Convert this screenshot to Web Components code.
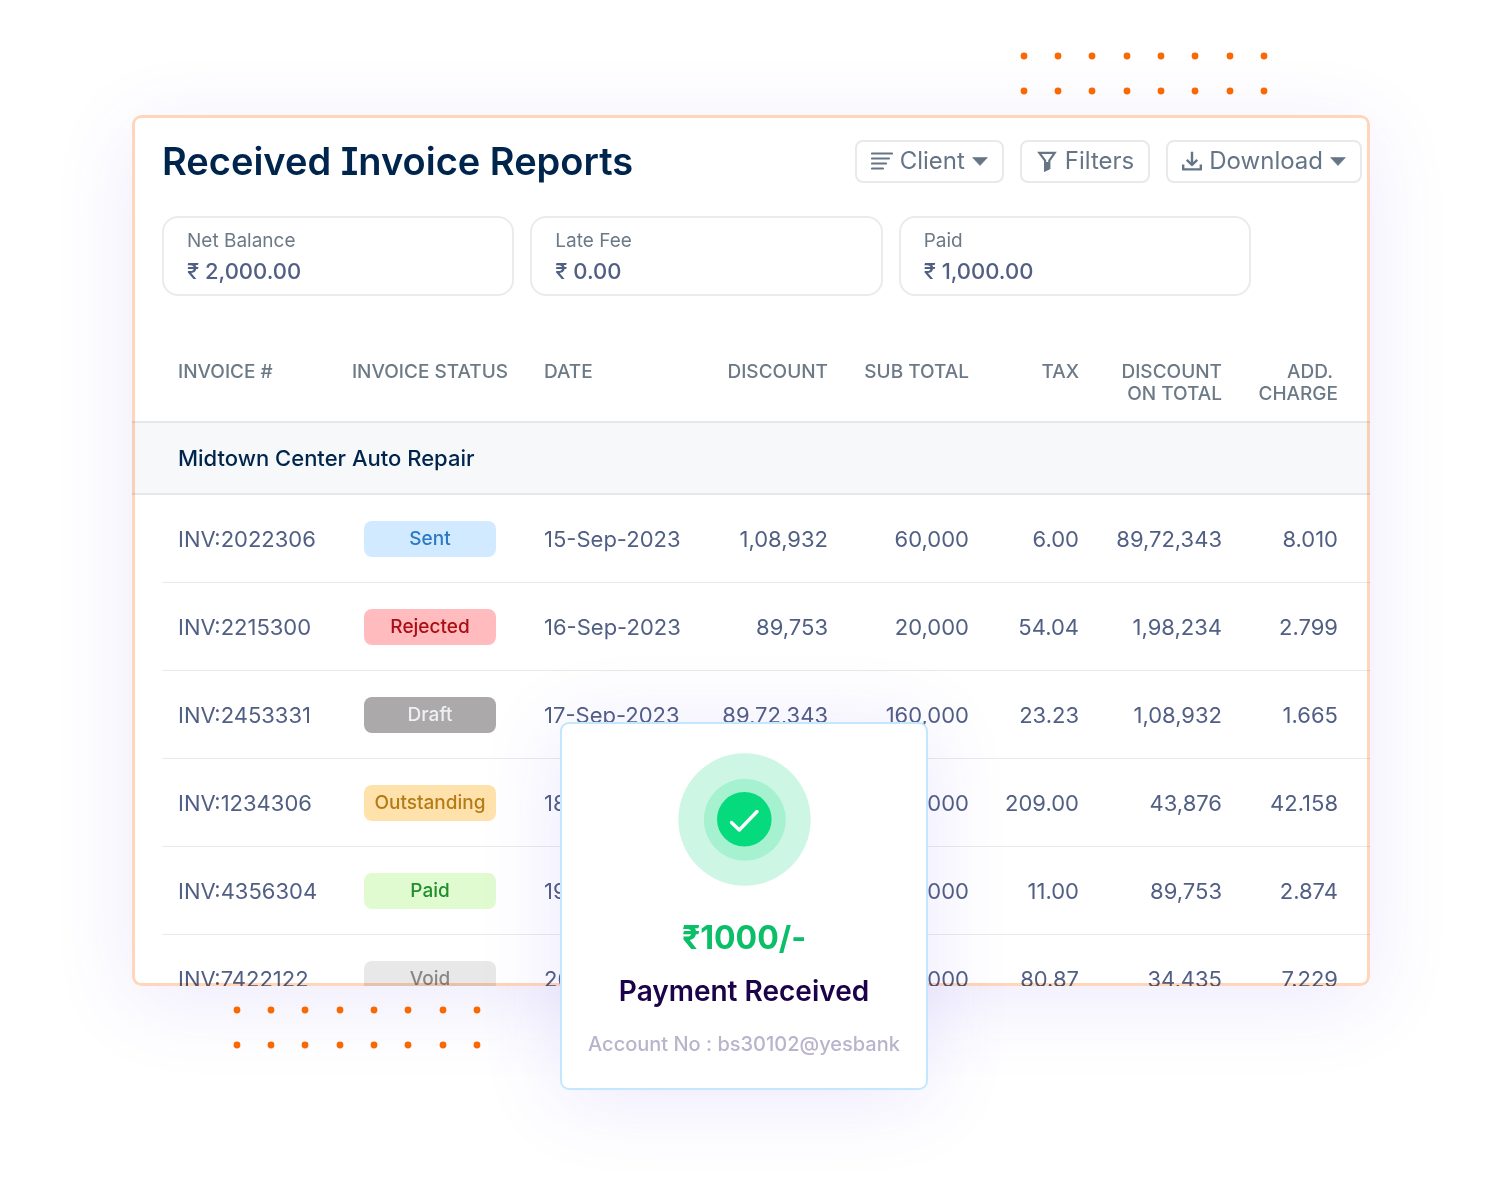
<!DOCTYPE html>
<html lang="en">
<head>
<meta charset="utf-8">
<title>Received Invoice Reports</title>
<style>
  body { margin: 0; background: #fff; font-family: Inter, "Liberation Sans", sans-serif; }
</style>
</head>
<body>
<invoice-showcase>
  <dot-grid slot="above"></dot-grid>
  <report-card heading="Received Invoice Reports">
    <tool-button slot="tools" icon="lines" menu>Client</tool-button>
    <tool-button slot="tools" icon="funnel">Filters</tool-button>
    <tool-button slot="tools" icon="download" menu>Download</tool-button>
    <stat-card slot="stats" label="Net Balance">₹ 2,000.00</stat-card>
    <stat-card slot="stats" label="Late Fee">₹ 0.00</stat-card>
    <stat-card slot="stats" label="Paid">₹ 1,000.00</stat-card>
    <invoice-table></invoice-table>
  </report-card>
  <dot-grid slot="below"></dot-grid>
  <payment-toast slot="toast" amount="₹1000/-" account="Account No : bs30102@yesbank">Payment Received</payment-toast>
</invoice-showcase>

<script>
const define = (name, render) => customElements.define(name, class extends HTMLElement {
  constructor() {
    super();
    this.attachShadow({ mode: 'open' });
  }
  connectedCallback() {
    this.shadowRoot.innerHTML = render(this);
  }
});

define('invoice-showcase', () => `
  <style>
    :host { display: block; position: relative; padding: 0 116px 150px 132px; }
    .above { display: flex; justify-content: flex-end; padding: 52px 102px 20px 0; }
    .below { display: flex; padding: 20px 0 0 101px; }
    .toast { position: absolute; top: 722px; left: 50%; margin-left: -183px; }
  </style>
  <div class="above"><slot name="above"></slot></div>
  <slot></slot>
  <div class="below"><slot name="below"></slot></div>
  <div class="toast"><slot name="toast"></slot></div>
`);

define('dot-grid', () => {
  const xs = [4, 38, 72, 107, 141, 175, 210, 244];
  const dots = [4, 39].map(y => xs.map(x => `<circle cx="${x}" cy="${y}" r="3.4"/>`).join('')).join('');
  return `
    <style>
      :host { display: block; position: relative; z-index: 1; }
      svg { display: block; fill: #f86803; }
    </style>
    <svg width="248" height="43" viewBox="0 0 248 43" aria-hidden="true">${dots}</svg>
  `;
});

define('report-card', host => `
  <style>
    :host {
      display: block; position: relative; overflow: hidden;
      background: #fff; border-radius: 9px;
      box-shadow: 0 16px 84px rgba(90, 60, 230, .11);
    }
    :host::after {
      content: ""; position: absolute; inset: 0; pointer-events: none;
      border: 3px solid #ffd6b9; border-radius: 9px; mix-blend-mode: multiply;
    }
    header { display: flex; align-items: center; justify-content: space-between; padding: 24px 8px 0 30px; }
    h1 {
      margin: 0; font-size: 38px; line-height: 44px; font-weight: 600; color: #00254d;
      font-feature-settings: "cv08";
    }
    .tools { display: flex; gap: 16px; }
    .stats { display: grid; grid-template-columns: repeat(3, 1fr); gap: 16px; margin: 33px 119px 0 30px; }
  </style>
  <header>
    <h1>${host.getAttribute('heading')}</h1>
    <div class="tools"><slot name="tools"></slot></div>
  </header>
  <div class="stats"><slot name="stats"></slot></div>
  <slot></slot>
`);

const icons = {
  lines: `<svg width="22" height="18" viewBox="0 0 22 18"><path d="M1 1.5H21M1 6.5H18M1 11.5H15M1 16.5H12" stroke="currentColor" stroke-width="2.2" stroke-linecap="round"/></svg>`,
  funnel: `<svg width="22" height="21" viewBox="-1.5 0 22 21"><path d="M1.8 1.8H17.2L11.8 9.6V17.4L7.6 19.4V9.6Z" fill="none" stroke="currentColor" stroke-width="2.2"/><path d="M7.6 11H11.8V17.6L7.6 19.6Z" fill="currentColor"/></svg>`,
  download: `<svg width="20" height="20" viewBox="0 0 20 20"><path d="M10 .8V13.4M4.8 8.8L10 14L15.2 8.8M1.2 13.6V18.4H18.8V13.6" fill="none" stroke="currentColor" stroke-width="2.4" stroke-linejoin="round"/></svg>`,
  caret: `<svg width="16" height="9" viewBox="0 0 16 9"><path d="M.6 .6H15.4L8 8.6Z" fill="currentColor" stroke="currentColor" stroke-width=".6" stroke-linejoin="round"/></svg>`
};

define('tool-button', host => {
  const menu = host.hasAttribute('menu');
  return `
    <style>
      :host { display: block; }
      button {
        display: flex; align-items: center; gap: 7px; height: 43px; padding: 0 14px;
        border: 2px solid #e7e9ed; border-radius: 8px; background: #fff; color: #667586;
        font: 400 24px/28px Inter, "Liberation Sans", sans-serif;
      }
      svg { display: block; flex: none; }
    </style>
    <button type="button" ${menu ? 'aria-haspopup="menu"' : ''}>
      ${icons[host.getAttribute('icon')]}<span><slot></slot></span>${menu ? icons.caret : ''}
    </button>
  `;
});

define('stat-card', host => `
  <style>
    :host {
      display: block; padding: 11px 23px 9px; border: 2px solid #e9ebee; border-radius: 16px;
    }
    .label { font-size: 19px; line-height: 24px; color: #6c7986; }
    .value { margin-top: 4px; font-size: 22px; line-height: 28px; font-weight: 500; color: #515f85; }
  </style>
  <div class="label">${host.getAttribute('label')}</div>
  <div class="value"><slot></slot></div>
`);

define('status-pill', host => `
  <style>
    :host {
      display: block; box-sizing: border-box; width: 132px; margin: 0 auto; border-radius: 8px;
      font-size: 19px; line-height: 36px; font-weight: 500; text-align: center;
    }
    :host([kind="sent"]) { background: #d2eaff; color: #2b79c2; }
    :host([kind="rejected"]) { background: #ffbbbd; color: #a90f14; }
    :host([kind="draft"]) { background: #aba9aa; color: #eef0f4; }
    :host([kind="outstanding"]) { background: #ffe2ab; color: #b57b17; }
    :host([kind="paid"]) { background: #e0fbd0; color: #1f8f2c; }
    :host([kind="void"]) { background: #e8e8e8; color: #8b8684; }
  </style>
  <slot></slot>
`);

const rows = [
  ['INV:2022306', 'Sent', '15-Sep-2023', '1,08,932', '60,000', '6.00', '89,72,343', '8.010'],
  ['INV:2215300', 'Rejected', '16-Sep-2023', '89,753', '20,000', '54.04', '1,98,234', '2.799'],
  ['INV:2453331', 'Draft', '17-Sep-2023', '89,72,343', '160,000', '23.23', '1,08,932', '1.665'],
  ['INV:1234306', 'Outstanding', '18-Sep-2023', '43,876', '80,000', '209.00', '43,876', '42.158'],
  ['INV:4356304', 'Paid', '19-Sep-2023', '89,753', '50,000', '11.00', '89,753', '2.874'],
  ['INV:7422122', 'Void', '20-Sep-2023', '34,435', '70,000', '80.87', '34,435', '7.229']
];

define('invoice-table', () => `
  <style>
    :host { display: block; margin-top: 40px; max-height: 650px; overflow: hidden; }
    table { width: 100%; table-layout: fixed; border-collapse: separate; border-spacing: 0; }
    th, td { padding: 0; text-align: right; }
    th:nth-child(1), td:nth-child(1) { padding-left: 46px; text-align: left; }
    th:nth-child(2), td:nth-child(2) { text-align: center; }
    th:nth-child(3), td:nth-child(3) { padding-left: 28px; text-align: left; }
    th:nth-child(8), td:nth-child(8) { padding-right: 32px; }
    thead th {
      height: 60px; padding-top: 25px; vertical-align: top; white-space: nowrap;
      font-size: 19px; line-height: 22px; font-weight: 500; color: #6c7986;
      border-bottom: 2px solid #e5e8eb;
    }
    tbody th {
      height: 70px; background: #f7f8fa; border-bottom: 2px solid #e5e8eb;
      font-size: 22px; line-height: 28px; font-weight: 500; color: #00254d;
    }
    td {
      height: 88px; font-size: 22px; line-height: 28px; color: #515f85; white-space: nowrap;
      background: linear-gradient(#e8eaed, #e8eaed) 0 100% / 100% 1px no-repeat;
    }
    td:first-child { background-position: 30px 100%; }
  </style>
  <table>
    <colgroup>
      <col style="width:212px"><col style="width:172px"><col style="width:184px"><col style="width:128px">
      <col style="width:141px"><col style="width:110px"><col style="width:143px"><col style="width:148px">
    </colgroup>
    <thead>
      <tr>
        <th scope="col">INVOICE #</th><th scope="col">INVOICE STATUS</th><th scope="col">DATE</th>
        <th scope="col">DISCOUNT</th><th scope="col">SUB TOTAL</th><th scope="col">TAX</th>
        <th scope="col">DISCOUNT<br>ON TOTAL</th><th scope="col">ADD.&nbsp;<br>CHARGE</th>
      </tr>
    </thead>
    <tbody>
      <tr><th colspan="8" scope="rowgroup">Midtown Center Auto Repair</th></tr>
      ${rows.map(r => `<tr>${r.map((c, i) => i === 1
        ? `<td><status-pill kind="${c.toLowerCase()}">${c}</status-pill></td>`
        : `<td>${c}</td>`).join('')}</tr>`).join('')}
    </tbody>
  </table>
`);

define('payment-toast', host => `
  <style>
    :host {
      display: flex; flex-direction: column; align-items: center; box-sizing: border-box;
      width: 368px; padding: 29px 0 32px; background: #fff;
      border: 2px solid #c3e7ff; border-radius: 9px; text-align: center; white-space: nowrap;
      box-shadow: 0 8px 84px rgba(90, 60, 230, .12);
    }
    svg { display: block; }
    .amount { margin-top: 32px; font-size: 32px; line-height: 40px; font-weight: 700; color: #0abf68; }
    .title { margin-top: 16px; font-size: 28px; line-height: 34px; font-weight: 600; color: #1b0249; }
    .account { margin-top: 24px; font-size: 20px; line-height: 24px; font-weight: 500; color: #b9b3cb; }
  </style>
  <svg width="133" height="133" viewBox="0 0 133 133" role="img" aria-label="Success">
    <circle cx="66.5" cy="66.5" r="66.2" fill="#cdf7e4"/>
    <circle cx="66.8" cy="66.8" r="41" fill="#a6f1d0"/>
    <circle cx="66.3" cy="66.3" r="27.3" fill="#05db7d"/>
    <path d="M53.5 69.5L61.3 77L79 58.5" fill="none" stroke="#fff" stroke-width="3.4" stroke-linecap="round" stroke-linejoin="round"/>
  </svg>
  <div class="amount">${host.getAttribute('amount')}</div>
  <div class="title"><slot></slot></div>
  <div class="account">${host.getAttribute('account')}</div>
`);
</script>
</body>
</html>
